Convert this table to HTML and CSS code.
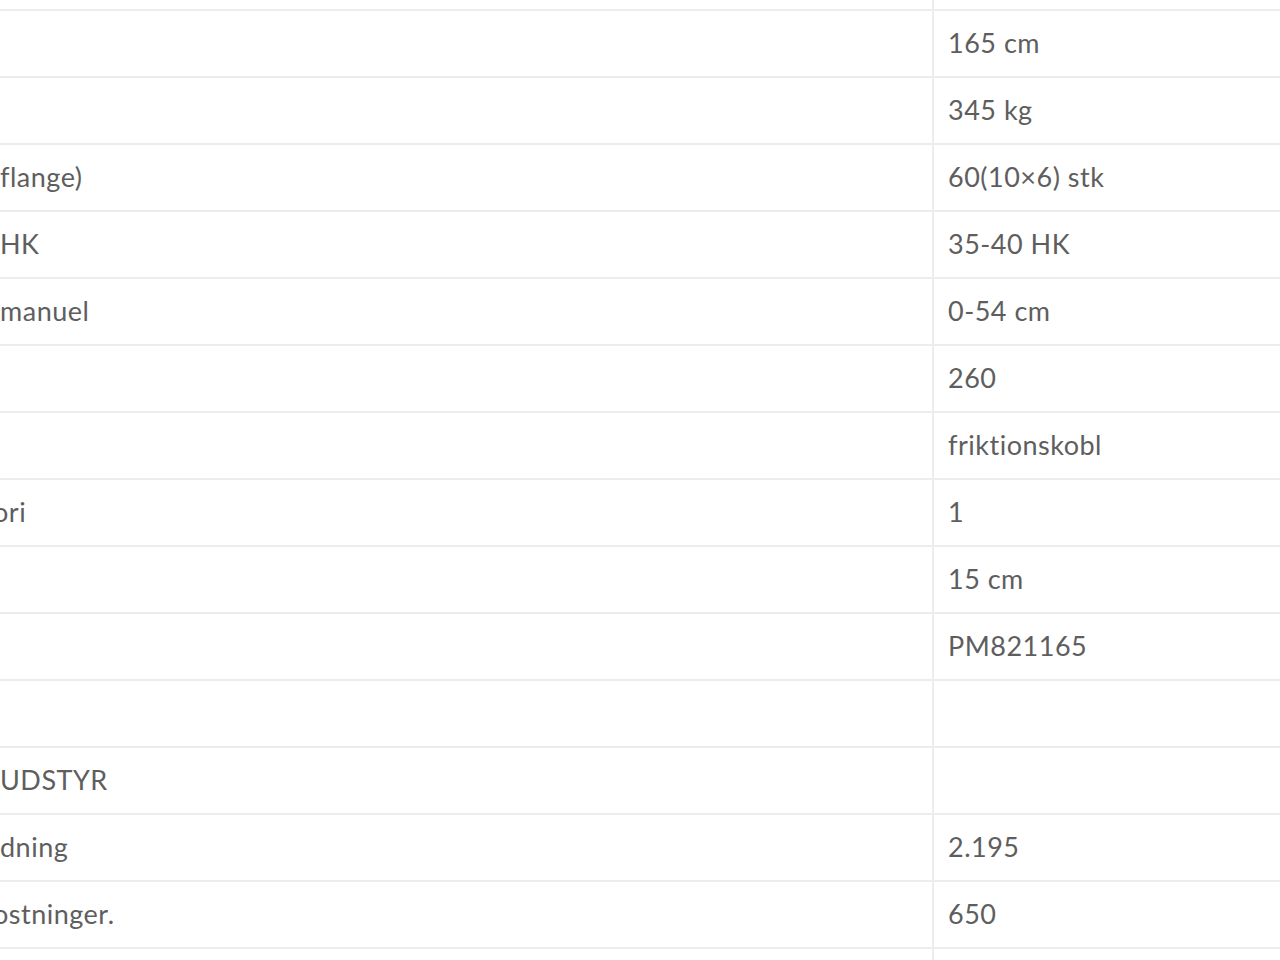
FILE: index.html
```html
<!DOCTYPE html>
<html lang="da">
<head>
  <meta charset="UTF-8">
  <meta name="viewport" content="width=device-width, initial-scale=1.0">
  <title>Specifikationer</title>
  <link rel="stylesheet" href="styles.css">
</head>
<body>
  <div class="spec-wrapper">
    <table class="spec-table">
      <tbody>
        <tr><td class="navn"></td><td class="vaerdi"></td></tr>
        <tr><td class="navn"></td><td class="vaerdi">165 cm</td></tr>
        <tr><td class="navn"></td><td class="vaerdi">345 kg</td></tr>
        <tr><td class="navn">flange)</td><td class="vaerdi">60(10×6) stk</td></tr>
        <tr><td class="navn">HK</td><td class="vaerdi">35-40 HK</td></tr>
        <tr><td class="navn">manuel</td><td class="vaerdi">0-54 cm</td></tr>
        <tr><td class="navn"></td><td class="vaerdi">260</td></tr>
        <tr><td class="navn"></td><td class="vaerdi">friktionskobl</td></tr>
        <tr><td class="navn"><span class="cut">ori</span></td><td class="vaerdi">1</td></tr>
        <tr><td class="navn"></td><td class="vaerdi">15 cm</td></tr>
        <tr><td class="navn"></td><td class="vaerdi">PM821165</td></tr>
        <tr><td class="navn"></td><td class="vaerdi"></td></tr>
        <tr><td class="navn">UDSTYR</td><td class="vaerdi"></td></tr>
        <tr><td class="navn">dning</td><td class="vaerdi">2.195</td></tr>
        <tr><td class="navn"><span class="cut">ostninger.</span></td><td class="vaerdi">650</td></tr>
        <tr><td class="navn"></td><td class="vaerdi"></td></tr>
      </tbody>
    </table>
  </div>
</body>
</html>
```

FILE: styles.css
```css
* { box-sizing: border-box; margin: 0; padding: 0; }
body {
  font-family: Lato, "Open Sans", sans-serif;
  background-color: #ffffff;
  color: #5e5e5e;
  overflow: hidden;
}
.spec-wrapper {
  width: 1280px;
  height: 960px;
  overflow: hidden;
}
.spec-table {
  width: 1280px;
  border-collapse: collapse;
  margin-top: -57px;
  font-size: 27px;
  letter-spacing: 0.5px;
}
.spec-table td {
  height: 67px;
  padding-bottom: 3px;
  border-bottom: 2px solid #ededed;
  vertical-align: middle;
  white-space: nowrap;
}
.navn {
  width: 933px;
  padding-left: 0;
}
.vaerdi {
  border-left: 2px solid #ededed;
  padding-left: 14px;
}
.cut {
  display: inline-block;
  margin-left: -7px;
}
```
